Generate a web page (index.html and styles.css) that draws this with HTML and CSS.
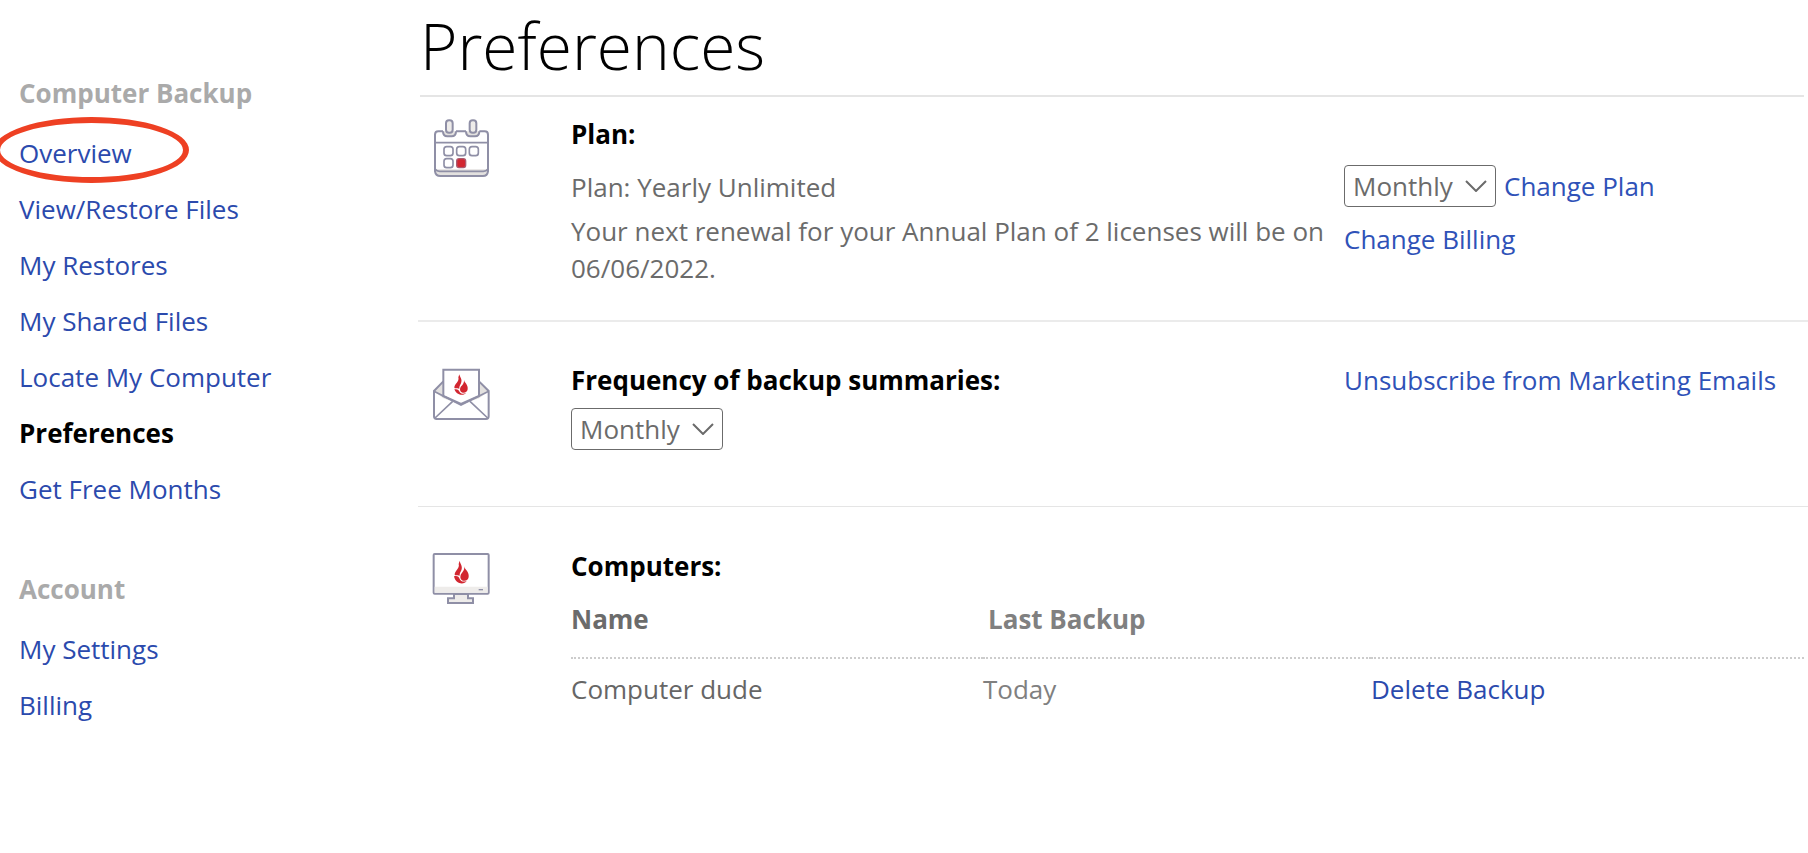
FILE: index.html
```html
<!DOCTYPE html>
<html lang="en">
<head>
  <meta charset="UTF-8">
  <title>Preferences</title>
  <meta name="viewport" content="width=device-width, initial-scale=1">
  <link rel="stylesheet" href="styles.css">
</head>
<body>
  <div class="page">
    <nav class="sidebar">
      <h2 class="nav-title">Computer Backup</h2>
      <ul class="nav-list">
        <li class="circled"><a href="#">Overview</a></li>
        <li><a href="#">View/Restore Files</a></li>
        <li><a href="#">My Restores</a></li>
        <li><a href="#">My Shared Files</a></li>
        <li><a href="#">Locate My Computer</a></li>
        <li><a href="#" class="active">Preferences</a></li>
        <li><a href="#">Get Free Months</a></li>
      </ul>
      <h2 class="nav-title">Account</h2>
      <ul class="nav-list">
        <li><a href="#">My Settings</a></li>
        <li><a href="#">Billing</a></li>
      </ul>
    </nav>

    <main class="content">
      <h1 class="title">Preferences</h1>

      <section class="row plan">
        <svg class="icon" viewBox="37 18 174 192" fill="none" stroke="#8f8fa6" stroke-width="6">
          <path d="M47 178 H204 V184 Q204 198 190 198 H61 Q47 198 47 184 Z" fill="#e3e1df" stroke="none"/>
          <path d="M70 64 q0 15 13 15 h12 q13 0 13 -15 Z M140 64 q0 15 13 15 h12 q13 0 13 -15 Z" fill="#e3e1df" stroke="none"/>
          <path d="M70 64 H56 Q46 64 46 74 V184 Q48 198 62 198 H190 Q203 198 205 184 V74 Q205 64 195 64 H179"/>
          <path d="M109 64 H139 M70 64 q0 15 13 15 h13 q13 0 13 -15 M139 64 q0 15 13 15 h14 q13 0 13 -15"/>
          <path d="M46 98 H205 M47 178 Q51 184 60 184 H191 Q200 184 204 178" stroke-width="5"/>
          <rect x="79" y="31" width="20" height="37" rx="9" fill="#eeecea"/>
          <rect x="150" y="31" width="20" height="37" rx="9" fill="#eeecea"/>
          <rect x="73" y="110" width="27" height="27" rx="8" stroke-width="5"/>
          <rect x="111" y="110" width="27" height="27" rx="8" stroke-width="5"/>
          <rect x="149" y="110" width="27" height="27" rx="8" stroke-width="5"/>
          <rect x="73" y="146" width="27" height="27" rx="8" stroke-width="5"/>
          <rect x="111" y="146" width="27" height="27" rx="7" fill="#d22630" stroke="#ab5c70" stroke-width="4"/>
        </svg>
        <div class="details">
          <h3>Plan:</h3>
          <p class="plan-name">Plan: Yearly Unlimited</p>
          <p>Your next renewal for your Annual Plan of 2 licenses will be on 06/06/2022.</p>
        </div>
        <div class="actions">
          <div class="change-plan">
            <span class="select">
              <select aria-label="Plan">
                <option>Monthly</option>
                <option>Yearly</option>
              </select>
              <svg class="arrow" viewBox="0 0 22 12"><path d="M1 1 L11 11 L21 1"/></svg>
            </span>
            <a href="#">Change Plan</a>
          </div>
          <a href="#">Change Billing</a>
        </div>
      </section>

      <section class="row summaries">
        <svg class="icon" viewBox="37 6 174 192" fill="none" stroke="#8f8fa6" stroke-width="6">
          <path d="M43 94 L71 66 V110 L124 134 L178 110 V66 L207 94 L178 115 L124 134 L71 115 Z" fill="#e3e1df" stroke="none"/>
          <path d="M71 64 L43 93 V169 Q43 177 51 177 H199 Q207 177 207 169 V93 L178 64"/>
          <path d="M71 108 V29 H178 V108 L124 132 Z" fill="#fff"/>
          <path d="M43 94 L124 135 L207 94" stroke-width="5"/>
          <path d="M46 174 L99 124 M204 174 L151 124" stroke-width="5"/>
          <g fill="#d22630" stroke="none">
            <path d="M119 43 C121 53 129 58 124 70 C122 76 118 78 119 86 C111 83 105 86 104 83 C104 72 120 65 116 52 Z"/>
            <path d="M133 59 C134 69 146 72 144 88 C143 95 137 99 129 98 C120 96 120 86 123 81 C127 75 134 71 133 59 Z"/>
            <path d="M104 88 C112 86 118 89 120 96 C123 102 132 103 139 99 C133 108 111 107 104 88 Z"/>
          </g>
        </svg>
        <div class="details">
          <h3><label for="frequency">Frequency of backup summaries:</label></h3>
          <span class="select">
            <select id="frequency">
              <option>Monthly</option>
              <option>Weekly</option>
            </select>
            <svg class="arrow" viewBox="0 0 22 12"><path d="M1 1 L11 11 L21 1"/></svg>
          </span>
        </div>
        <div class="actions">
          <a href="#">Unsubscribe from Marketing Emails</a>
        </div>
      </section>

      <section class="row computers">
        <svg class="icon" viewBox="37 9 174 192" fill="none" stroke="#8f8fa6" stroke-width="6">
          <path d="M103 147 H145 V160 H160 V174 H85 V160 H103 Z" fill="#eeecea"/>
          <rect x="42" y="27" width="165" height="119" rx="3" fill="#fff"/>
          <path d="M45 125 H204 V143 H45 Z" fill="#eeecea" stroke="none"/>
          <path d="M177 134 H190" stroke-width="4"/>
          <g fill="#d22630" stroke="none">
            <path d="M120 47 C122 58 130 63 125 76 C123 82 119 84 120 92 C112 89 106 92 105 89 C105 77 121 70 117 57 Z"/>
            <path d="M134 64 C135 75 149 79 147 96 C146 103 140 109 130 107 C121 105 121 94 124 88 C128 81 135 77 134 64 Z"/>
            <path d="M103 94 C112 91 118 95 120 102 C123 110 134 112 141 107 C134 121 108 118 103 94 Z"/>
          </g>
        </svg>
        <div class="details">
          <h3>Computers:</h3>
          <table>
            <thead>
              <tr><th class="name">Name</th><th class="backup">Last Backup</th><th></th></tr>
            </thead>
            <tbody>
              <tr><td>Computer dude</td><td class="backup">Today</td><td><a href="#">Delete Backup</a></td></tr>
            </tbody>
          </table>
        </div>
      </section>
    </main>
  </div>
</body>
</html>
```

FILE: styles.css
```css
* {
  box-sizing: border-box;
}

body {
  margin: 0;
  background: #fff;
  color: #6b6b6b;
  font-family: "Open Sans", sans-serif;
  font-size: 26px;
  line-height: 36px;
}

h1, h2, h3, p, ul {
  margin: 0;
  padding: 0;
}

a {
  color: #2f52b8;
  text-decoration: none;
}

.page {
  display: grid;
  grid-template-columns: 418px 1fr;
}

/* Sidebar */

.sidebar {
  padding: 75px 0 0 19px;
}

.nav-title {
  margin-bottom: 14px;
  color: #aaa;
  font-size: 26px;
  font-weight: bold;
}

.nav-list {
  margin-bottom: 54px;
  list-style: none;
  line-height: 56px;
}

.nav-list a {
  color: #2b4aad;
}

.nav-list .active {
  color: #000;
  font-weight: bold;
}

.circled {
  position: relative;
}

.circled::after {
  content: "";
  box-sizing: border-box;
  position: absolute;
  top: -8px;
  left: -25px;
  width: 195px;
  height: 66px;
  border: 6px solid #ee4023;
  border-radius: 50%;
  pointer-events: none;
}

/* Content */

.title {
  margin: 0 4px 0 2px;
  padding: 1px 0 4px;
  border-bottom: 2px solid #e5e5e5;
  color: #000;
  font-size: 64px;
  font-weight: 300;
  line-height: 90px;
}

.row {
  display: grid;
  grid-template-columns: 153px 1fr 464px;
  padding-top: 40px;
}

.plan {
  padding-top: 19px;
  padding-bottom: 33px;
  border-bottom: 2px solid #ebebeb;
}

.summaries {
  padding-bottom: 56px;
  border-bottom: 1px solid #e5e5e5;
}

.computers {
  grid-template-columns: 153px 1fr;
  padding-top: 41px;
}

.icon {
  width: 58px;
  height: 64px;
  margin-left: 14px;
}

h3 {
  color: #000;
  font-size: 26px;
  font-weight: bold;
}

.details p {
  line-height: 37px;
}

.details .plan-name {
  margin: 17px 0 7px;
}

.plan .actions {
  padding-top: 49px;
}

.change-plan {
  display: flex;
  align-items: baseline;
  gap: 8px;
  margin-bottom: 14px;
}

.select {
  display: inline-block;
  position: relative;
  vertical-align: top;
}

.summaries .select {
  margin-top: 10px;
}

select {
  display: block;
  width: 152px;
  height: 42px;
  padding: 0 8px;
  appearance: none;
  background: #fff;
  border: 1px solid #6b6b6b;
  border-radius: 4px;
  color: #6b6b6b;
  font-family: inherit;
  font-size: 26px;
}

.arrow {
  position: absolute;
  top: 15px;
  right: 9px;
  width: 22px;
  height: 12px;
  fill: none;
  stroke: #6b6b6b;
  stroke-width: 2;
  pointer-events: none;
}

/* Computers table */

table {
  width: calc(100% - 4px);
  margin-top: 17px;
  border-collapse: collapse;
  table-layout: fixed;
}

th, td {
  padding: 0;
  text-align: left;
}

thead tr {
  border-bottom: 2px dotted #ccc;
}

th {
  padding-bottom: 20px;
}

td {
  padding-top: 12px;
  color: #666;
}

.name {
  width: 412px;
}

.backup {
  width: 388px;
  color: #808080;
}

th.backup {
  padding-left: 5px;
}

td a {
  color: #2b4aad;
}
```
